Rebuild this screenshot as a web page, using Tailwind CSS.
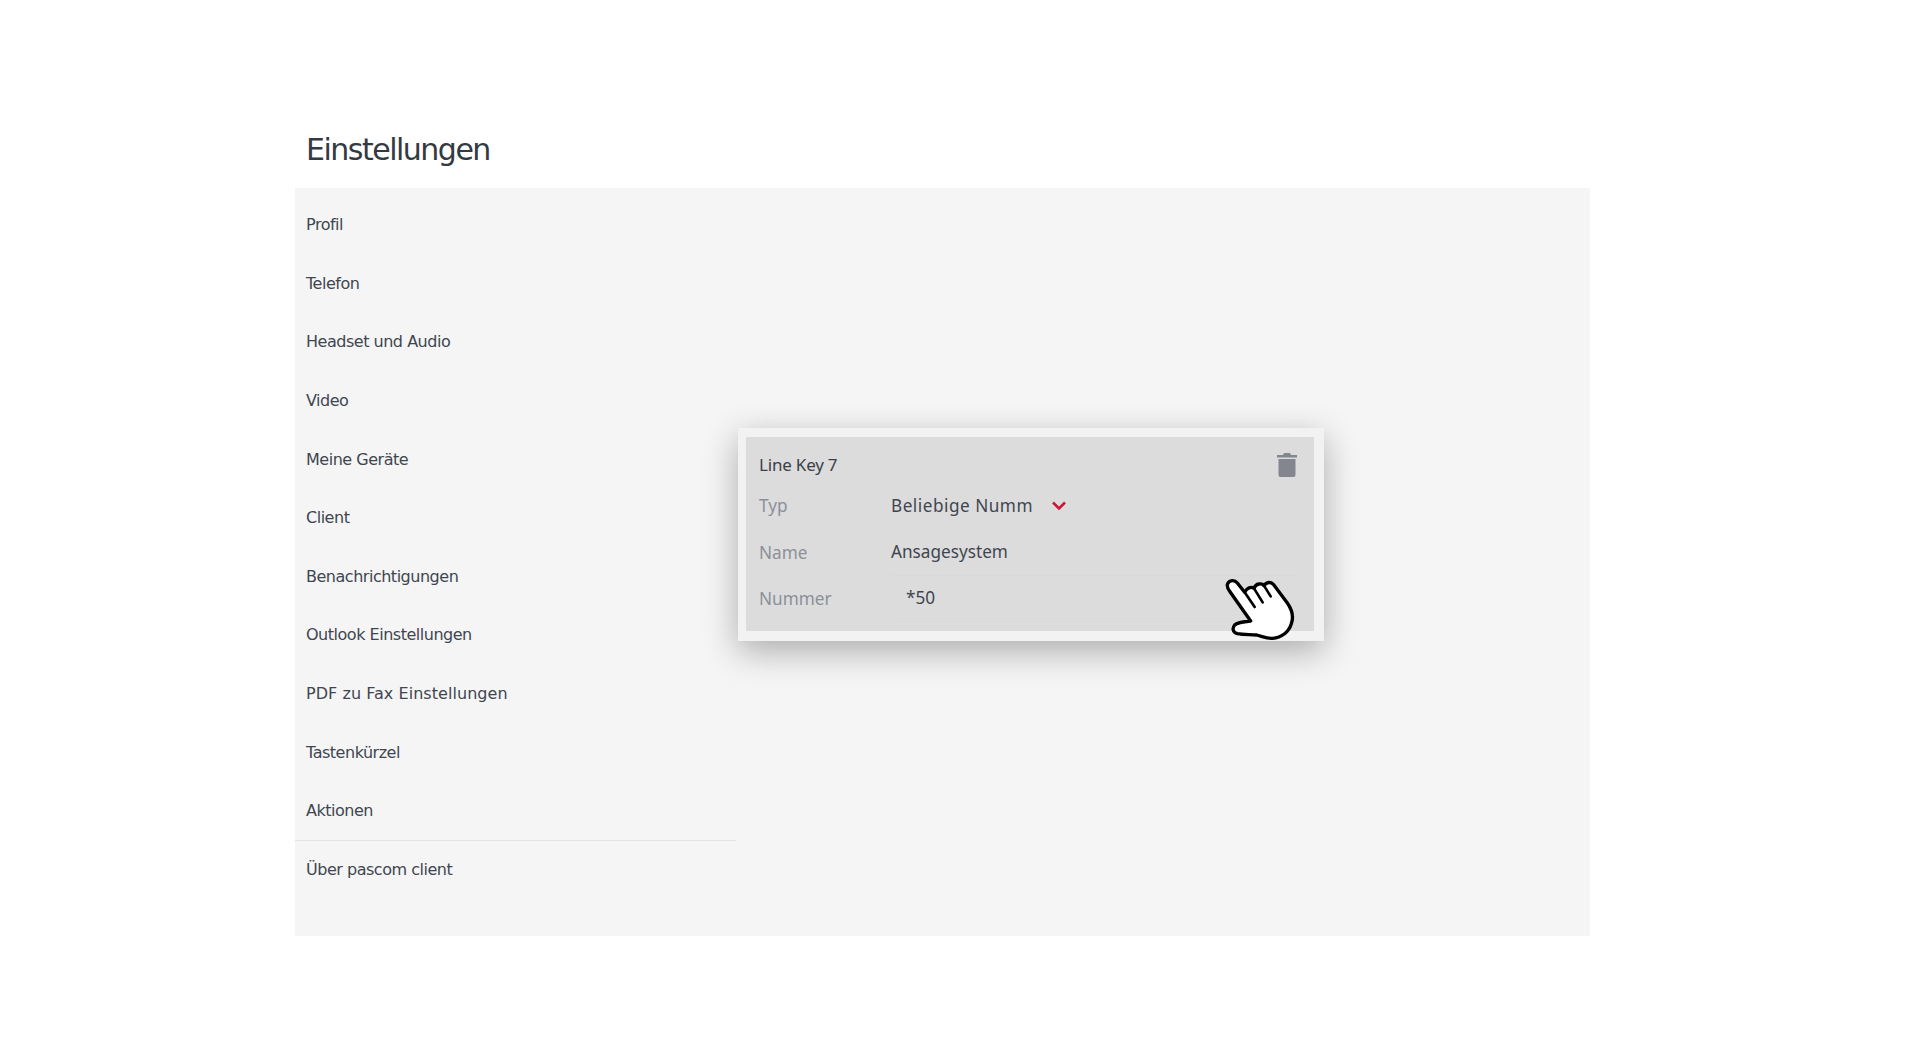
<!DOCTYPE html>
<html lang="de">
<head>
    <meta charset="UTF-8">
    <title>Einstellungen</title>
    <script src="https://cdn.jsdelivr.net/npm/@tailwindcss/browser@4"></script>
</head>
<body class="bg-white h-[1040px] overflow-hidden font-['DejaVu_Sans',sans-serif]">
    <div class="relative w-[1295px] ml-[295px] pt-[128px]">
        <h1 class="h-[60px] pl-[11px] pt-[2px] text-[30px] leading-[40px] text-[#333a42] tracking-[-1.5px]">Einstellungen</h1>

        <div class="h-[748px] bg-[#f5f5f5] pt-[8px]">
            <nav class="w-[441px] text-[#3f4650] text-[16px] tracking-[-0.48px]">
                <div class="h-[58.6px] pl-[11px] flex items-center">Profil</div>
                <div class="h-[58.6px] pl-[11px] flex items-center">Telefon</div>
                <div class="h-[58.6px] pl-[11px] flex items-center">Headset und Audio</div>
                <div class="h-[58.6px] pl-[11px] flex items-center">Video</div>
                <div class="h-[58.6px] pl-[11px] flex items-center">Meine Geräte</div>
                <div class="h-[58.6px] pl-[11px] flex items-center">Client</div>
                <div class="h-[58.6px] pl-[11px] flex items-center">Benachrichtigungen</div>
                <div class="h-[58.6px] pl-[11px] flex items-center">Outlook Einstellungen</div>
                <div class="h-[58.6px] pl-[11px] flex items-center tracking-[0.05px]">PDF zu Fax Einstellungen</div>
                <div class="h-[58.6px] pl-[11px] flex items-center">Tastenkürzel</div>
                <div class="h-[57.6px] pl-[11px] flex items-center">Aktionen</div>
                <div class="h-[60px] pl-[11px] flex items-center border-t border-[#e2e2e2]">Über pascom client</div>
            </nav>
        </div>

        <!-- card lying over the panel -->
        <div class="absolute left-[443px] top-[428px] w-[586px] h-[213px] bg-[#f2f2f2] pl-[8px] pr-[10px] pt-[9px] shadow-[0_10px_32px_rgba(0,0,0,0.3)] font-['Noto_Sans',sans-serif]">
            <div class="h-[194px] bg-[#dcdcdc] pl-[13px] pr-[17px] text-[17.2px]">
                <div class="flex items-center justify-between h-[52px] pt-[3px]">
                    <span class="text-[#3a4048] text-[17px] tracking-[-0.2px]">Line Key 7</span>
                    <svg class="w-[20px] h-[24px]" viewBox="0 0 20 24">
                        <path fill="#83868f" d="M7 0h6l1 2h6v2.500H0V2h6zM1.500 6h17v16a2 2 0 0 1-2 2h-13a2 2 0 0 1-2-2z"/>
                    </svg>
                </div>
                <div class="flex items-center h-[42px] mt-[-4px]">
                    <span class="w-[132px] text-[#8c9099]">Typ</span>
                    <span class="w-[141px] overflow-hidden whitespace-nowrap text-[#3f4650] tracking-[0.5px]">Beliebige Nummer</span>
                    <svg class="w-[16px] h-[10px] ml-[19px]" viewBox="0 0 16 10" fill="none" stroke="#cf1238" stroke-width="2.500">
                        <path d="M2 1.500l6 6 6-6"/>
                    </svg>
                </div>
                <div class="flex items-center h-[47px] mt-[2px]">
                    <span class="w-[132px] text-[#8c9099]">Name</span>
                    <span class="flex-1 h-full flex items-center border-b border-[#d9d9d9] text-[#3f4650]">Ansagesystem</span>
                </div>
                <div class="flex items-center h-[46px] mt-[-1px]">
                    <span class="w-[132px] pt-[2px] text-[#8c9099]">Nummer</span>
                    <span class="flex-1 h-full flex items-center pl-[15px] border-b border-[#d9d9d9] text-[#3f4650]">*50</span>
                </div>
            </div>
        </div>

        <!-- hand pointer -->
        <svg class="absolute left-[929px] top-[578px] w-[72px] h-[64px]" viewBox="72 415 216 192">
            <path fill="#fff" stroke="#000" stroke-width="10" stroke-linejoin="round" stroke-linecap="round" d="M112 430C104 420 88 420 82 434C80 442 84 448 90 456L152 544C132 546 112 548 104 556C96 566 98 578 112 582C130 586 152 584 170 586C186 590 202 598 218 596C244 594 266 578 274 552C282 530 276 510 262 490L220 434C212 426 200 426 192 438C186 430 168 430 162 446C154 440 140 444 134 458Z"/>
            <path fill="none" stroke="#000" stroke-width="8" stroke-linecap="round" d="M134 458L164 502M162 446L188 488M192 438L212 470"/>
        </svg>
    </div>
</body>
</html>
